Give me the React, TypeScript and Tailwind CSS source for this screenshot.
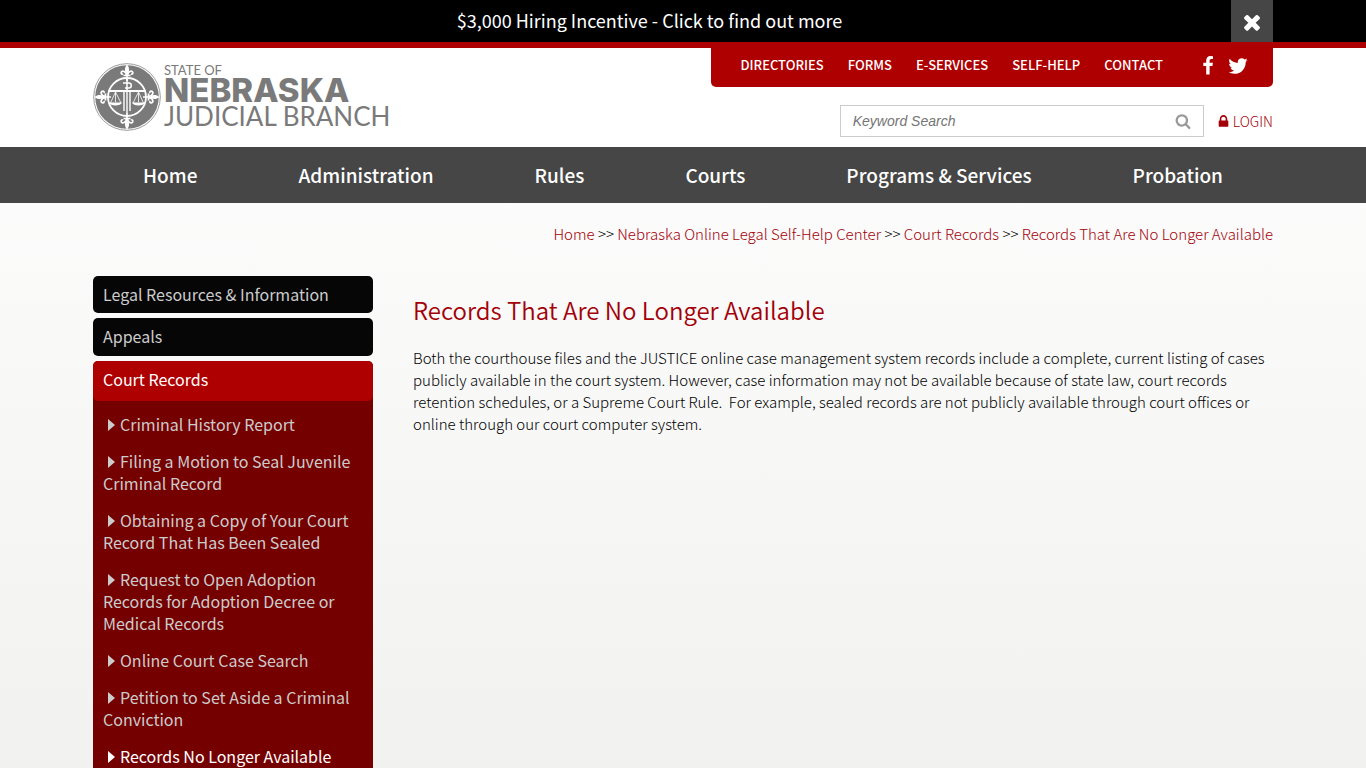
import type { ReactNode } from "react";

const ICONS = {
  times:
    "M1490 1322q0 40-28 68l-136 136q-28 28-68 28t-68-28l-294-294-294 294q-28 28-68 28t-68-28l-136-136q-28-28-28-68t28-68l294-294-294-294q-28-28-28-68t28-68l136-136q28-28 68-28t68 28l294 294 294-294q28-28 68-28t68 28l136 136q28 28 28 68t-28 68l-294 294 294 294q28 28 28 68z",
  search:
    "M1216 832q0-185-131.5-316.5t-316.5-131.5-316.5 131.5-131.5 316.5 131.5 316.5 316.5 131.5 316.5-131.5 131.5-316.5zm512 832q0 52-38 90t-90 38q-54 0-90-38l-343-342q-179 124-399 124-143 0-273.5-55.5t-225-150-150-225-55.5-273.5 55.5-273.5 150-225 225-150 273.5-55.5 273.5 55.5 225 150 150 225 55.5 273.5q0 220-124 399l343 343q37 37 37 90z",
  lock: "M640 768h512v-192q0-106-75-181t-181-75-181 75-75 181v192zm832 96v576q0 40-28 68t-68 28h-960q-40 0-68-28t-28-68v-576q0-40 28-68t68-28h32v-192q0-184 132-316t316-132 316 132 132 316v192h32q40 0 68 28t28 68z",
  facebook:
    "M1343 12v264h-157q-86 0-116 36t-30 108v189h293l-39 296h-254v759h-306v-759h-255v-296h255v-218q0-186 104-288.5t277-102.5q147 0 228 12z",
  twitter:
    "M1684 408q-67 98-162 167 1 14 1 42 0 130-38 259.5t-115.5 248.5-184.5 210.5-258 146-323 54.5q-271 0-496-145 35 4 78 4 225 0 401-138-105-2-188-64.5t-114-159.5q33 5 61 5 43 0 85-11-112-23-185.5-111.5t-73.5-205.5v-4q68 38 146 41-66-44-105-115t-39-154q0-88 44-163 121 149 294.5 238.5t371.5 99.5q-8-38-8-74 0-134 94.5-228.5t228.5-94.5q140 0 236 102 109-21 205-78-37 115-142 178 93-10 186-50z",
};

function Icon({ name, className }: { name: keyof typeof ICONS; className: string }) {
  return (
    <svg viewBox="0 0 1792 1792" fill="currentColor" aria-hidden="true" className={className}>
      <path d={ICONS[name]} />
    </svg>
  );
}

function Fleur({ angle }: { angle: number }) {
  return (
    <g transform={`rotate(${angle} 34 34)`}>
      <path d="M34 1.500C36.400 4.500 36.600 7 35 11.500H33C31.400 7 31.600 4.500 34 1.500Z" fill="#fff" />
      <path
        d="M33.400 12C33 8.500 29.500 7 28.300 9.200C27.700 10.800 29 11.600 30 10.800M34.600 12C35 8.500 38.500 7 39.700 9.200C40.300 10.800 39 11.600 38 10.800M30.500 12.500H37.500M34 10V18"
        fill="none"
        stroke="#fff"
        strokeWidth="1.700"
      />
    </g>
  );
}

function Seal() {
  return (
    <svg viewBox="0 0 68 68" className="size-[68px] shrink-0" aria-hidden="true">
      <circle cx="34" cy="34" r="33.300" fill="#fff" stroke="#9a9a9a" strokeWidth="1" />
      <circle cx="34" cy="34" r="31.800" fill="#7a7a7a" />
      <circle cx="34" cy="34" r="19" fill="none" stroke="#fff" strokeWidth="1.800" />
      {[0, 90, 180, 270].map((angle) => (
        <Fleur key={angle} angle={angle} />
      ))}
      <g fill="none" stroke="#fff" strokeWidth="1">
        <path d="M15 28H53" strokeWidth="1.800" />
        <path d="M22.500 29L17.500 40M22.500 29V39M22.500 29L28 40M45.500 29L40 40M45.500 29V39M45.500 29L50.500 40" strokeWidth=".8" />
        <path d="M31 29V48M34 29V50M37 29V48" strokeWidth="1.400" />
        <path d="M34 15V28M30 20H36C39 20 39 25 36 25H32" strokeWidth="1.500" />
      </g>
      <path d="M16 39.500H29C28 43.500 17 43.500 16 39.500ZM39 39.500H52C51 43.500 40 43.500 39 39.500Z" fill="#fff" />
    </svg>
  );
}

function Logo() {
  return (
    <a href="#home" aria-label="State of Nebraska Judicial Branch" className="mt-[15px] flex h-[69px]">
      <Seal />
      <span className="ml-[3px] flex flex-col whitespace-nowrap font-['Lato',sans-serif] text-[#7a7a7a]">
        <span className="text-[13px] leading-[14px]">STATE OF</span>
        <span className="font-['Inter',sans-serif] text-[33px] font-extrabold leading-[27px]">NEBRASKA</span>
        <span className="text-[26px] leading-[24px]">JUDICIAL BRANCH</span>
      </span>
    </a>
  );
}

const utilityLinks = ["Directories", "Forms", "E-Services", "Self-Help", "Contact"];
const mainLinks = ["Home", "Administration", "Rules", "Courts", "Programs & Services", "Probation"];
const recordLinks = [
  "Criminal History Report",
  "Filing a Motion to Seal Juvenile Criminal Record",
  "Obtaining a Copy of Your Court Record That Has Been Sealed",
  "Request to Open Adoption Records for Adoption Decree or Medical Records",
  "Online Court Case Search",
  "Petition to Set Aside a Criminal Conviction",
  "Records No Longer Available",
];
const crumbs = ["Home", "Nebraska Online Legal Self-Help Center", "Court Records", "Records That Are No Longer Available"];

function Container({ children, className = "" }: { children: ReactNode; className?: string }) {
  return <div className={`mx-auto w-full max-w-[1180px] ${className}`}>{children}</div>;
}

function Sidebar() {
  return (
    <nav aria-label="Section" className="w-[280px] shrink-0 text-[16px] leading-[22px] text-[#cccccc]">
      <a href="#legal" className="mb-[5px] block rounded-[5px] bg-[#060606] px-[10px] pb-2 pt-[7px]">
        Legal Resources &amp; Information
      </a>
      <a href="#appeals" className="mb-[5px] block rounded-[5px] bg-[#060606] px-[10px] pb-[9px] pt-[7px]">
        Appeals
      </a>
      <div className="rounded-[5px] bg-[#750000] pb-4">
        <a href="#records" className="block rounded-[5px] bg-[#ae0000] px-[10px] pb-[11px] pt-[7px] text-white">
          Court Records
        </a>
        <ul className="flex flex-col gap-[15px] px-[10px] pt-3">
          {recordLinks.map((label, i) => (
            <li key={label} className={i === recordLinks.length - 1 ? "text-white" : ""}>
              <a href="#record">
                <svg viewBox="0 0 7 12" fill="currentColor" aria-hidden="true" className="mx-[5px] inline-block h-3 w-[7px] align-baseline">
                  <path d="M0 0L7 6L0 12Z" />
                </svg>
                {label}
              </a>
            </li>
          ))}
        </ul>
      </div>
    </nav>
  );
}

export default function App() {
  return (
    <div className="min-h-screen bg-linear-to-b from-[#ffffff] to-[#f1f1f0] font-['Noto_Sans_CJK_SC',sans-serif] text-black">
      <div className="bg-black text-white">
        <Container className="flex h-[42px]">
          <a href="#hiring" className="flex-1 pr-[25px] pt-2 text-center text-[18px] leading-6">
            $3,000 Hiring Incentive - Click to find out more
          </a>
          <button type="button" aria-label="Close" className="flex h-[42px] w-[42px] items-center justify-center bg-[#464646] pt-[2px]">
            <Icon name="times" className="size-6" />
          </button>
        </Container>
      </div>

      <header className="border-t-[6px] border-[#ae0000] bg-white">
        <Container className="flex h-[99px] justify-between">
          <Logo />
          <div className="flex flex-col items-end">
            <nav aria-label="Utility" className="flex h-[39px] items-center rounded-b-[5px] bg-[#ae0000] pl-[30px] pr-6 text-[13px] font-medium uppercase leading-5 text-white">
              <div className="flex gap-6 pb-[6px]">
                {utilityLinks.map((label) => (
                  <a key={label} href="#utility">{label}</a>
                ))}
              </div>
              <a href="#facebook" aria-label="Facebook" className="mb-1 ml-[35px]">
                <Icon name="facebook" className="size-5" />
              </a>
              <a href="#twitter" aria-label="Twitter" className="mb-1 ml-[9px]">
                <Icon name="twitter" className="size-[22px]" />
              </a>
            </nav>
            <div className="mt-[18px] flex items-center">
              <form className="flex h-8 w-[364px] items-center border border-[#cccccc]">
                <input
                  type="text"
                  aria-label="Keyword Search"
                  placeholder="Keyword Search"
                  className="h-full min-w-0 flex-1 pl-3 font-['Liberation_Sans',sans-serif] text-[14px] font-normal italic outline-none placeholder:text-[#757575]"
                />
                <button type="button" aria-label="Search" className="mr-3 text-[#999999]">
                  <Icon name="search" className="size-4" />
                </button>
              </form>
              <a href="#login" className="ml-3 flex items-center gap-[2px] text-[14px] font-light leading-5 text-[#a30008]">
                <Icon name="lock" className="size-[15px]" />
                LOGIN
              </a>
            </div>
          </div>
        </Container>
      </header>

      <nav aria-label="Main" className="bg-[#464646] text-white">
        <Container className="flex h-14 items-center justify-between px-[50px] text-[19px] font-medium leading-7">
          {mainLinks.map((label) => (
            <a key={label} href="#main">{label}</a>
          ))}
        </Container>
      </nav>

      <Container>
        <nav aria-label="Breadcrumb" className="pt-5 text-right text-[15px] font-light leading-[22px]">
          {crumbs.map((label, i) => (
            <span key={label}>
              {i > 0 && " >> "}
              <a href="#crumb" className="text-[#a30008]">{label}</a>
            </span>
          ))}
        </nav>
        <div className="mt-[31px] flex gap-10">
          <Sidebar />
          <main className="min-w-0 flex-1">
            <h1 className="mt-[17px] text-[24px] font-[350] leading-[34px] text-[#a30008]">Records That Are No Longer Available</h1>
            <p className="mt-5 text-[15px] font-light leading-[22px]">
              Both the courthouse files and the JUSTICE online case management system records include a complete, current listing of cases
              publicly available in the court system. However, case information may not be available because of state law, court records
              retention schedules, or a Supreme Court Rule.&nbsp; For example, sealed records are not publicly available through court
              offices or online through our court computer system.
            </p>
          </main>
        </div>
      </Container>
    </div>
  );
}
